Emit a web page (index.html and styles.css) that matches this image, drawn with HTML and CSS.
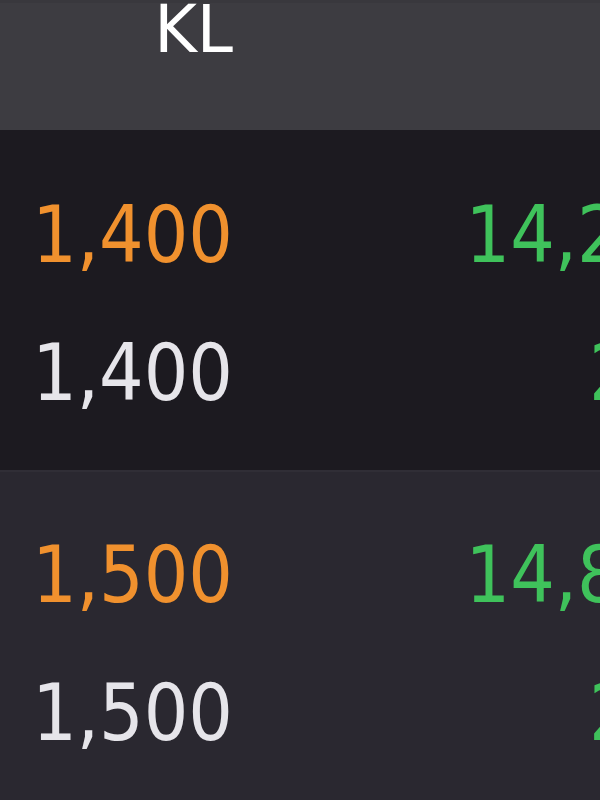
FILE: index.html
```html
<!DOCTYPE html>
<html lang="en">
<head>
    <meta charset="UTF-8">
    <meta name="viewport" content="width=device-width, initial-scale=1.0">
    <title>Bảng giá</title>
    <link rel="stylesheet" href="styles.css">
</head>
<body>
    <div class="board">
        <!-- Column header -->
        <div class="head">
            <div class="cell col-price">KL</div>
            <div class="cell col-total"></div>
        </div>

        <!-- Price steps -->
        <div class="group dark">
            <div class="line">
                <div class="cell col-price up">1,400</div>
                <div class="cell col-total green">14,250</div>
            </div>
            <div class="line sub">
                <div class="cell col-price">1,400</div>
                <div class="cell col-total green">250</div>
            </div>
        </div>

        <div class="group light">
            <div class="line">
                <div class="cell col-price up">1,500</div>
                <div class="cell col-total green">14,850</div>
            </div>
            <div class="line sub">
                <div class="cell col-price">1,500</div>
                <div class="cell col-total green">250</div>
            </div>
        </div>
    </div>
</body>
</html>
```

FILE: styles.css
```css
/* General Styles */
body {
    margin: 0;
    background: #2a2830;
    font-family: 'DejaVu Sans Condensed', 'DejaVu Sans', sans-serif;
    overflow: hidden;
}

.board {
    width: 600px;
    height: 800px;
    overflow: hidden;
}

/* Header */
.head {
    display: flex;
    height: 130px;
    background: #3d3c41;
    border-top: 3px solid #39383d;
    box-sizing: border-box;
    color: #fff;
    font-family: 'DejaVu Sans', sans-serif;
    font-size: 65px;
    line-height: 54px;
}

/* Row groups */
.group {
    padding: 36px 0 28px;
}
.group.dark {
    background: #1c1a20;
}
.group.light {
    background: #2a2830;
    border-top: 2px solid #302e36;
    padding-top: 34px;
}

.line {
    display: flex;
    font-size: 78px;
    line-height: 138px;
    color: #e6e5ea;
}

/* Columns */
.cell {
    flex: none;
    white-space: nowrap;
    text-align: right;
}
.col-price {
    width: 233px;
}
.col-total {
    width: 478px;
}
.sub .col-total {
    width: 490px;
}

.up {
    color: #f0912e;
}
.green {
    color: #3fc25b;
}
```
